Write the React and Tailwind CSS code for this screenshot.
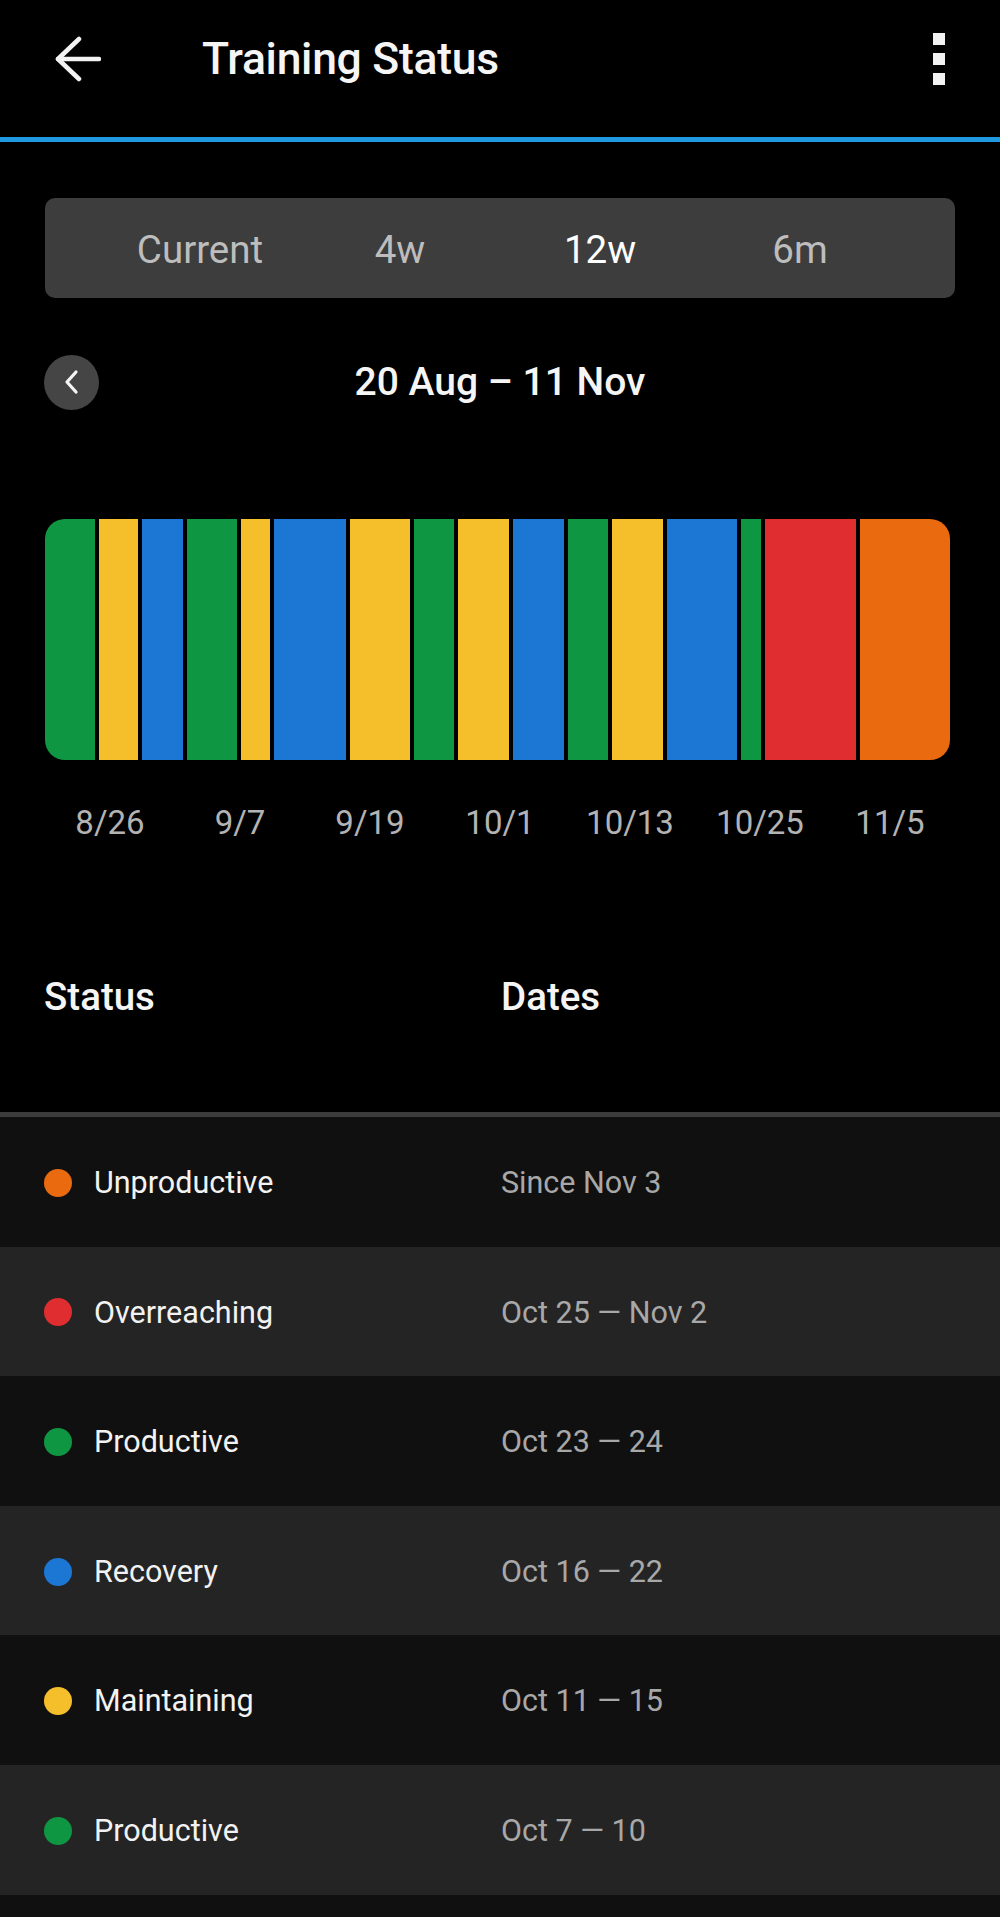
const GREEN = 'bg-[#0f9642]';
const YELLOW = 'bg-[#f5bf2c]';
const BLUE = 'bg-[#1b76d4]';
const RED = 'bg-[#e02d30]';
const ORANGE = 'bg-[#ea6a10]';

// widths in px measured off the chart, used as flex weights
const segments = [
  { w: 50, c: GREEN },
  { w: 40, c: YELLOW },
  { w: 41, c: BLUE },
  { w: 50, c: GREEN },
  { w: 30, c: YELLOW },
  { w: 72, c: BLUE },
  { w: 60, c: YELLOW },
  { w: 41, c: GREEN },
  { w: 51, c: YELLOW },
  { w: 51, c: BLUE },
  { w: 41, c: GREEN },
  { w: 51, c: YELLOW },
  { w: 71, c: BLUE },
  { w: 20, c: GREEN },
  { w: 91, c: RED },
  { w: 91, c: ORANGE },
];

const axis = ['8/26', '9/7', '9/19', '10/1', '10/13', '10/25', '11/5'];

const history = [
  { label: 'Unproductive', dates: 'Since Nov 3', dot: ORANGE },
  { label: 'Overreaching', dates: 'Oct 25 — Nov 2', dot: RED },
  { label: 'Productive', dates: 'Oct 23 — 24', dot: GREEN },
  { label: 'Recovery', dates: 'Oct 16 — 22', dot: BLUE },
  { label: 'Maintaining', dates: 'Oct 11 — 15', dot: YELLOW },
  { label: 'Productive', dates: 'Oct 7 — 10', dot: GREEN },
];

function BackArrow() {
  return (
    <svg width="46" height="46" viewBox="0 0 46 46" fill="none" stroke="#f2f2f2" strokeWidth="4.5" strokeLinecap="round" strokeLinejoin="round">
      <path d="M3 23 H44" />
      <path d="M24 3 L3 23 L24 43" />
    </svg>
  );
}

function Kebab() {
  return (
    <div className="flex flex-col gap-[8px]">
      <span className="block h-[12px] w-[12px] bg-[#f2f2f2]" />
      <span className="block h-[12px] w-[12px] bg-[#f2f2f2]" />
      <span className="block h-[12px] w-[12px] bg-[#f2f2f2]" />
    </div>
  );
}

export default function App() {
  return (
    <div className="min-h-[1917px] w-[1000px] overflow-hidden bg-black font-['Roboto','Liberation_Sans',sans-serif]">
      {/* Top bar */}
      <header className="flex h-[137px] items-center pb-[19px]">
        <div className="ml-[55px]">
          <BackArrow />
        </div>
        <h1 className="ml-[101px] text-[44.5px] font-medium tracking-[-0.3px] text-[#f5f5f5]">Training Status</h1>
        <div className="ml-auto mr-[55px]">
          <Kebab />
        </div>
      </header>
      <div className="h-[5px] bg-[#1f9ae0]" />

      {/* Range tabs */}
      <div className="mx-[45px] mt-[56px] grid h-[100px] grid-cols-4 items-center rounded-[10px] bg-[#3d3d3d] px-[55px] pt-[4px] text-center text-[38.5px]">
        <span className="text-[#bdbdbd]">Current</span>
        <span className="text-[#bdbdbd]">4w</span>
        <span className="text-white">12w</span>
        <span className="text-[#bdbdbd]">6m</span>
      </div>

      {/* Date navigation */}
      <div className="mt-[55px] grid h-[55px] grid-cols-[1fr_auto_1fr] items-center">
        <div className="pl-[44px]">
          <button className="flex h-[55px] w-[55px] items-center justify-center rounded-full bg-[#454545]">
            <svg width="16" height="26" viewBox="0 0 16 26" fill="none" stroke="#f5f5f5" strokeWidth="3.2" strokeLinecap="round" strokeLinejoin="round">
              <path d="M12 3 L3 13 L12 23" />
            </svg>
          </button>
        </div>
        <div className="text-[39px] font-medium text-[#f5f5f5]">20 Aug – 11 Nov</div>
        <div />
      </div>

      {/* Status chart */}
      <div className="ml-[45px] mt-[111px] flex h-[241px] w-[905px] gap-[4px] overflow-hidden rounded-[20px]">
        {segments.map((s, i) => (
          <div key={i} className={`h-full basis-0 ${s.c}`} style={{ flexGrow: s.w }} />
        ))}
      </div>
      <div className="mx-[45px] mt-[43px] grid grid-cols-7 text-center text-[33px] leading-[40px] text-[#b3b3b3]">
        {axis.map((a) => (
          <span key={a}>{a}</span>
        ))}
      </div>

      {/* Table header */}
      <div className="mt-[132px] grid grid-cols-[501px_1fr] text-[38.5px] font-medium leading-[44px] text-[#f5f5f5]">
        <span className="pl-[44px]">Status</span>
        <span>Dates</span>
      </div>
      <div className="mt-[93px] h-[5px] bg-[#3c3c3c]" />

      {/* History rows */}
      <div>
        {history.map((row, i) => (
          <div
            key={i}
            className={`grid h-[129.6px] grid-cols-[501px_1fr] items-center pt-[2px] text-[30.5px] ${i % 2 === 0 ? 'bg-[#101010]' : 'bg-[#242424]'}`}
          >
            <div className="flex items-center pl-[44px]">
              <span className={`block h-[28px] w-[28px] rounded-full ${row.dot}`} />
              <span className="ml-[22px] text-[#f2f2f2]">{row.label}</span>
            </div>
            <span className="text-[#a8a8a8]">{row.dates}</span>
          </div>
        ))}
        <div className="h-[130px] bg-[#101010]" />
      </div>
    </div>
  );
}
